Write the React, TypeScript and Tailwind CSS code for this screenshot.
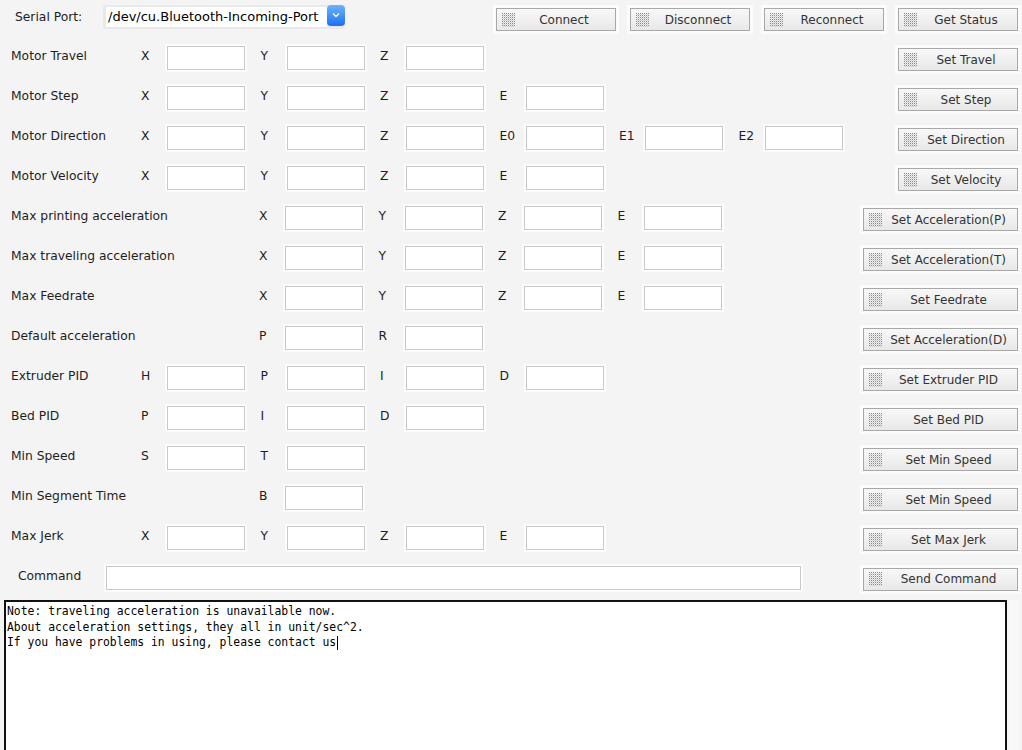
import { useId } from "react";

type Slot = { l: string } | null;

type Row = { label: string; slots: Slot[]; btn: string; wide?: boolean };

const rows: Row[] = [
  { label: "Motor Travel", slots: [{ l: "X" }, { l: "Y" }, { l: "Z" }], btn: "Set Travel" },
  { label: "Motor Step", slots: [{ l: "X" }, { l: "Y" }, { l: "Z" }, { l: "E" }], btn: "Set Step" },
  {
    label: "Motor Direction",
    slots: [{ l: "X" }, { l: "Y" }, { l: "Z" }, { l: "E0" }, { l: "E1" }, { l: "E2" }],
    btn: "Set Direction",
  },
  { label: "Motor Velocity", slots: [{ l: "X" }, { l: "Y" }, { l: "Z" }, { l: "E" }], btn: "Set Velocity" },
  {
    label: "Max printing acceleration",
    slots: [null, { l: "X" }, { l: "Y" }, { l: "Z" }, { l: "E" }],
    btn: "Set Acceleration(P)",
    wide: true,
  },
  {
    label: "Max traveling acceleration",
    slots: [null, { l: "X" }, { l: "Y" }, { l: "Z" }, { l: "E" }],
    btn: "Set Acceleration(T)",
    wide: true,
  },
  {
    label: "Max Feedrate",
    slots: [null, { l: "X" }, { l: "Y" }, { l: "Z" }, { l: "E" }],
    btn: "Set Feedrate",
    wide: true,
  },
  { label: "Default acceleration", slots: [null, { l: "P" }, { l: "R" }], btn: "Set Acceleration(D)", wide: true },
  { label: "Extruder PID", slots: [{ l: "H" }, { l: "P" }, { l: "I" }, { l: "D" }], btn: "Set Extruder PID", wide: true },
  { label: "Bed PID", slots: [{ l: "P" }, { l: "I" }, { l: "D" }], btn: "Set Bed PID", wide: true },
  { label: "Min Speed", slots: [{ l: "S" }, { l: "T" }], btn: "Set Min Speed", wide: true },
  { label: "Min Segment Time", slots: [null, { l: "B" }], btn: "Set Min Speed", wide: true },
  { label: "Max Jerk", slots: [{ l: "X" }, { l: "Y" }, { l: "Z" }, { l: "E" }], btn: "Set Max Jerk", wide: true },
];

function Grip() {
  const id = useId();
  return (
    <svg width="13" height="14" className="shrink-0">
      <defs>
        <pattern id={id} width="2" height="2" patternUnits="userSpaceOnUse">
          <rect x="0" y="0" width="1" height="1" fill="#8a8a8a" />
          <rect x="1" y="1" width="1" height="1" fill="#cfcfcf" />
        </pattern>
      </defs>
      <rect x="0" y="0" width="13" height="14" fill={`url(#${id})`} />
    </svg>
  );
}

function Btn({ label, className }: { label: string; className: string }) {
  return (
    <button
      className={`flex h-[23px] shrink-0 items-center border border-[#a8a8a8] bg-gradient-to-b from-[#f8f8f8] to-[#e8e8e8] pl-[5px] pr-[2px] text-[12px] text-[#333] shadow-[0_0_0_3px_#fcfcfc] ${className}`}
    >
      <Grip />
      <span className="flex-1 text-center">{label}</span>
    </button>
  );
}

function Field({ className = "w-[78px]" }: { className?: string }) {
  return (
    <div className={`h-[24px] shrink-0 border border-[#c9c9c9] bg-white shadow-[0_0_0_2px_#fcfcfc] ${className}`} />
  );
}

export default function App() {
  return (
    <div
      className="h-[750px] w-[1022px] overflow-hidden bg-[#f4f4f4] text-[12.3px] text-[#1e1e1e]"
      style={{ fontFamily: '"DejaVu Sans", "Liberation Sans", sans-serif' }}
    >
      {/* serial port + connection buttons */}
      <div className="flex h-[38px] items-center pr-[4px]">
        <span className="w-[103px] self-start whitespace-nowrap pl-[15px] pt-[8px]">Serial Port:</span>
        <div className="mb-[5px] flex h-[24px] w-[242px] items-center rounded-[3px] bg-[#e9e9e9] pl-[3px]">
          <div className="flex h-[20px] flex-1 items-center bg-white pl-[2px] text-[13px] text-black">
            /dev/cu.Bluetooth-Incoming-Port
          </div>
          <div className="flex h-[21px] w-[18px] items-center justify-center self-start rounded-[4px] bg-gradient-to-b from-[#6cb3fa] to-[#1a6ff1]">
            <svg width="8" height="6" viewBox="0 0 8 6">
              <path d="M1 1.5 L4 4.5 L7 1.5" stroke="white" strokeWidth="1.4" fill="none" />
            </svg>
          </div>
        </div>
        <div className="ml-auto flex gap-[14px] pt-[1px]">
          <Btn label="Connect" className="w-[120px]" />
          <Btn label="Disconnect" className="w-[120px]" />
          <Btn label="Reconnect" className="w-[120px]" />
          <Btn label="Get Status" className="w-[120px]" />
        </div>
      </div>

      {rows.map((r, i) => (
        <div key={i} className="flex h-[40px] items-center pl-[11px] pr-[4px]">
          <span className="w-[130px] shrink-0 whitespace-nowrap pb-[4px]">{r.label}</span>
          {r.slots.map((s, j) =>
            s ? (
              <div key={j} className="flex w-[119.5px] shrink-0 items-center">
                <span className="w-[26px] pb-[4px]">{s.l}</span>
                <Field />
              </div>
            ) : (
              <div key={j} className="w-[118px] shrink-0" />
            )
          )}
          <Btn label={r.btn} className={`ml-auto mt-[3px] ${r.wide ? "w-[155px]" : "w-[120px]"}`} />
        </div>
      ))}

      {/* command row */}
      <div className="flex h-[40px] items-center pl-[18px] pr-[4px]">
        <span className="w-[88px] shrink-0 pb-[3px]">Command</span>
        <Field className="w-[695px]" />
        <Btn label="Send Command" className="ml-auto mt-[2px] w-[155px]" />
      </div>

      {/* output console */}
      <div className="mt-[2px] flex pl-[4px]">
        <div
          className="h-[160px] w-[1003px] border-2 border-[#111] bg-white pl-[1px] pt-[2px] text-[11.4px] leading-[15.5px] text-black"
          style={{ fontFamily: '"DejaVu Sans Mono", "Liberation Mono", monospace' }}
        >
          <div>Note: traveling acceleration is unavailable now.</div>
          <div>About acceleration settings, they all in unit/sec^2.</div>
          <div className="flex items-center">
            If you have problems in using, please contact us
            <span className="ml-[1px] inline-block h-[14px] w-[1px] bg-black" />
          </div>
        </div>
        <div className="ml-[2px] h-[160px] w-[10px] bg-[#f8f8f8]" />
      </div>
    </div>
  );
}
